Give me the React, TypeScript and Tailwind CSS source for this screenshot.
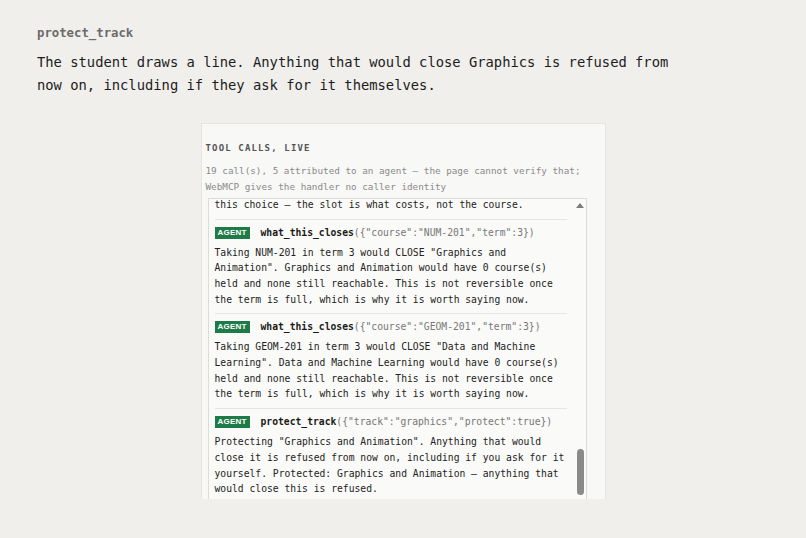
import React from "react";

type Call = {
  fn: string;
  args: string;
  body: string;
};

// the log is scrolled to the bottom; only the tail of the earlier call shows
const earlierTail = "this choice — the slot is what costs, not the course.";

const calls: Call[] = [
  {
    fn: "what_this_closes",
    args: '({"course":"NUM-201","term":3})',
    body: 'Taking NUM-201 in term 3 would CLOSE "Graphics and Animation". Graphics and Animation would have 0 course(s) held and none still reachable. This is not reversible once the term is full, which is why it is worth saying now.',
  },
  {
    fn: "what_this_closes",
    args: '({"course":"GEOM-201","term":3})',
    body: 'Taking GEOM-201 in term 3 would CLOSE "Data and Machine Learning". Data and Machine Learning would have 0 course(s) held and none still reachable. This is not reversible once the term is full, which is why it is worth saying now.',
  },
  {
    fn: "protect_track",
    args: '({"track":"graphics","protect":true})',
    body: 'Protecting "Graphics and Animation". Anything that would close it is refused from now on, including if you ask for it yourself. Protected: Graphics and Animation — anything that would close this is refused.',
  },
];

const CallRow: React.FC<{ call: Call }> = ({ call }) => (
  <div className="border-t border-[#e6e6e2] pt-[5px] pb-[6px]">
    <div className="flex items-center gap-[11px] h-[16px]">
      <span className="bg-[#1e7a47] text-white font-['Liberation_Sans',Arial,sans-serif] font-bold text-[8px] leading-[12px] h-[12px] px-[3px] tracking-[0.2px]">
        AGENT
      </span>
      <span className="text-[9.7px] leading-[16px] whitespace-nowrap">
        <span className="font-bold text-[#1a1a1a]">{call.fn}</span>
        <span className="text-[#777]">{call.args}</span>
      </span>
    </div>
    <p className="mt-[4px] text-[9.7px] leading-[15.7px] text-[#222]">
      {call.body}
    </p>
  </div>
);

export default function App() {
  return (
    <div className="min-h-screen bg-[#f0efec] font-['DejaVu_Sans_Mono',monospace] pt-[24px]">
      <div className="pl-[37px]">
        <h2 className="text-[12.3px] leading-[18px] font-bold text-[#6b6b6b]">
          protect_track
        </h2>
        <p className="mt-[9px] w-[645px] text-[13.8px] leading-[23px] text-[#1c1c1c]">
          The student draws a line. Anything that would close Graphics is
          refused from now on, including if they ask for it themselves.
        </p>
      </div>

      <div className="mt-[26px] mx-auto w-[405px] h-[376px] overflow-hidden bg-[#f8f8f6] border border-b-0 border-[#e6e5e1] px-[4px] pt-[16px]">
        <div className="text-[9px] leading-[16px] font-bold tracking-[1.15px] text-[#555]">
          TOOL CALLS, LIVE
        </div>
        <p className="mt-[7px] text-[9.3px] leading-[16px] text-[#8a8a8a]">
          19 call(s), 5 attributed to an agent — the page cannot verify that;
          WebMCP gives the handler no caller identity
        </p>

        <div className="relative mt-[3px] ml-[2px] w-[379px] h-[306px] border border-[#dcdcd8] bg-[#fafaf8]">
          <div className="h-full overflow-hidden flex flex-col justify-end pl-[6px] pr-[19px]">
            <p className="pb-[6px] text-[9.7px] leading-[15.7px] text-[#222]">
              {earlierTail}
            </p>
            {calls.map((c, i) => (
              <CallRow key={i} call={c} />
            ))}
          </div>
          {/* scrollbar */}
          <div className="absolute top-[4px] right-[2px] w-0 h-0 border-l-[4px] border-r-[4px] border-b-[5px] border-l-transparent border-r-transparent border-b-[#7c7c7c]" />
          <div className="absolute top-[250px] right-[2px] w-[7px] h-[46px] rounded-full bg-[#8a8a8a]" />
        </div>
      </div>
    </div>
  );
}
